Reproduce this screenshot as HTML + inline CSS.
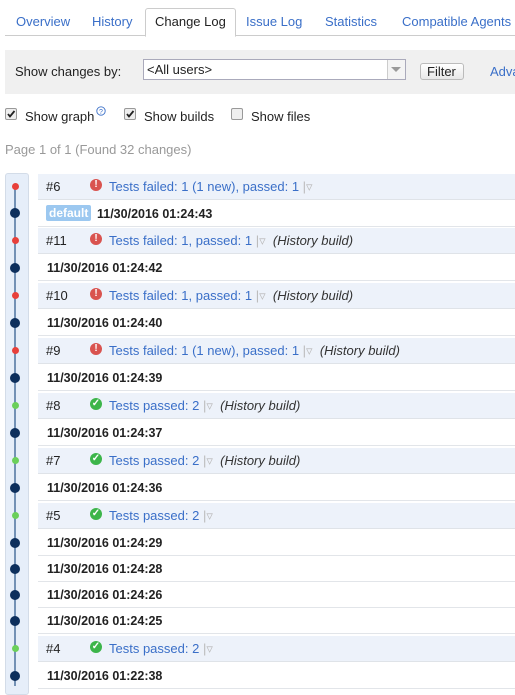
<!DOCTYPE html><html><head><style>
body{margin:0;width:515px;height:680px;overflow:hidden;background:#fff;font-family:"Liberation Sans",Arial,sans-serif;font-size:13px;color:#222;position:relative}
.a{position:absolute;white-space:nowrap}
.tab{position:absolute;top:14px;color:#3a6fc8;font-size:13px}
.b{position:absolute;left:38px;right:0;height:25px;background:#edf2fa;border-bottom:1px solid #dfe3e8}
.c{position:absolute;left:38px;right:0;height:25px;border-bottom:1px solid #e2e5e9}
.b span,.c span{position:absolute;top:5px;white-space:nowrap}
.num{left:8px}
.ic{left:52px;top:5px!important;width:12px;height:12px;border-radius:50%;color:#fff;font-size:10px;font-weight:bold;text-align:center;line-height:12px}
.f{background:#d9534f}.p{background:#3cb54a}
.st{left:71px;color:#3a6fc8}
.st i{font-style:normal;color:#bbb}
.hb{font-style:italic;color:#333}
.d{left:9px;font-weight:bold;font-size:12.5px;top:6px!important}
.dot{position:absolute;border-radius:50%}
.cb{position:absolute;width:10px;height:10px;border:1px solid #999;border-radius:2px;background:#eee}
</style></head><body>
<div class="a" style="left:5px;top:35px;width:510px;border-top:1px solid #ccc"></div>
<div class="a" style="left:145px;top:8px;width:89px;height:27px;border:1px solid #ccc;border-bottom:1px solid #fff;border-radius:3px 3px 0 0;background:#fff"></div>
<span class="tab" style="left:16px">Overview</span>
<span class="tab" style="left:92px">History</span>
<span class="tab" style="left:155px;color:#222">Change Log</span>
<span class="tab" style="left:246px">Issue Log</span>
<span class="tab" style="left:325px">Statistics</span>
<span class="tab" style="left:402px">Compatible Agents</span>
<div class="a" style="left:5px;top:50px;width:510px;height:44px;background:#f0f0f0"></div>
<span class="a" style="left:15px;top:64px">Show changes by:</span>
<div class="a" style="left:143px;top:59px;width:261px;height:19px;border:1px solid #aab;background:#fff"></div>
<span class="a" style="left:147px;top:62px">&lt;All users&gt;</span>
<div class="a" style="left:387px;top:60px;width:17px;height:19px;border-left:1px solid #ccc;background:#f4f4f4"></div>
<div class="a" style="left:391px;top:67px;border-left:5px solid transparent;border-right:5px solid transparent;border-top:5px solid #999"></div>
<div class="a" style="left:420px;top:63px;width:42px;height:15px;border:1px solid #bbb;border-radius:3px;background:linear-gradient(#fff,#e8e8e8)"></div>
<span class="a" style="left:427px;top:64px">Filter</span>
<span class="a" style="left:490px;top:64px;color:#3a6fc8">Adva</span>
<div class="cb" style="left:5px;top:108px"><svg width="10" height="10" style="position:absolute;left:0;top:0"><path d="M2 5 L4 7.5 L8.5 2" stroke="#222" stroke-width="1.8" fill="none"/></svg></div>
<span class="a" style="left:25px;top:109px">Show graph</span>
<svg class="a" style="left:96px;top:106px" width="10" height="10"><circle cx="5" cy="5" r="4.2" fill="none" stroke="#3a6fc8" stroke-width="0.9"/><text x="5" y="8" font-size="7" text-anchor="middle" fill="#3a6fc8" font-family="Liberation Sans">?</text></svg>
<div class="cb" style="left:124px;top:108px"><svg width="10" height="10" style="position:absolute;left:0;top:0"><path d="M2 5 L4 7.5 L8.5 2" stroke="#222" stroke-width="1.8" fill="none"/></svg></div>
<span class="a" style="left:144px;top:109px">Show builds</span>
<div class="cb" style="left:231px;top:108px"></div>
<span class="a" style="left:251px;top:109px">Show files</span>
<span class="a" style="left:5px;top:142px;color:#999">Page 1 of 1 (Found 32 changes)</span>

<div class="a" style="left:5px;top:173px;width:22px;height:520px;background:#e6eef9;border:1px solid #d3dce8;border-radius:3px"></div>
<div class="a" style="left:14px;top:186px;width:2px;height:500px;background:#7391b5"></div>

<div class="b" style="top:174px"><span class="num">#6</span><span class="ic f">!</span><span class="st">Tests failed: 1 (1 new), passed: 1 <i>|</i><i>▿</i></span></div>
<div class="c" style="top:201px"><span style="left:8px;top:4px;background:#9cc8f0;color:#fff;font-weight:bold;font-size:12px;padding:1px 3px;border-radius:2px">default</span><span class="d" style="left:59px">11/30/2016 01:24:43</span></div>
<div class="b" style="top:228px"><span class="num">#11</span><span class="ic f">!</span><span class="st">Tests failed: 1, passed: 1 <i>|</i><i>▿</i> &nbsp;<em class="hb">(History build)</em></span></div>
<div class="c" style="top:255px"><span class="d">11/30/2016 01:24:42</span></div>
<div class="b" style="top:283px"><span class="num">#10</span><span class="ic f">!</span><span class="st">Tests failed: 1, passed: 1 <i>|</i><i>▿</i> &nbsp;<em class="hb">(History build)</em></span></div>
<div class="c" style="top:310px"><span class="d">11/30/2016 01:24:40</span></div>
<div class="b" style="top:338px"><span class="num">#9</span><span class="ic f">!</span><span class="st">Tests failed: 1 (1 new), passed: 1 <i>|</i><i>▿</i> &nbsp;<em class="hb">(History build)</em></span></div>
<div class="c" style="top:365px"><span class="d">11/30/2016 01:24:39</span></div>
<div class="b" style="top:393px"><span class="num">#8</span><span class="ic p">✓</span><span class="st">Tests passed: 2 <i>|</i><i>▿</i> &nbsp;<em class="hb">(History build)</em></span></div>
<div class="c" style="top:420px"><span class="d">11/30/2016 01:24:37</span></div>
<div class="b" style="top:448px"><span class="num">#7</span><span class="ic p">✓</span><span class="st">Tests passed: 2 <i>|</i><i>▿</i> &nbsp;<em class="hb">(History build)</em></span></div>
<div class="c" style="top:475px"><span class="d">11/30/2016 01:24:36</span></div>
<div class="b" style="top:503px"><span class="num">#5</span><span class="ic p">✓</span><span class="st">Tests passed: 2 <i>|</i><i>▿</i></span></div>
<div class="c" style="top:530px"><span class="d">11/30/2016 01:24:29</span></div>
<div class="c" style="top:556px"><span class="d">11/30/2016 01:24:28</span></div>
<div class="c" style="top:582px"><span class="d">11/30/2016 01:24:26</span></div>
<div class="c" style="top:608px"><span class="d">11/30/2016 01:24:25</span></div>
<div class="b" style="top:636px"><span class="num">#4</span><span class="ic p">✓</span><span class="st">Tests passed: 2 <i>|</i><i>▿</i></span></div>
<div class="c" style="top:663px"><span class="d">11/30/2016 01:22:38</span></div>

<div class="dot" style="left:12px;top:183px;width:7px;height:7px;background:#e8403a"></div>
<div class="dot" style="left:10px;top:208px;width:10px;height:10px;background:#0d2f5c"></div>
<div class="dot" style="left:12px;top:237px;width:7px;height:7px;background:#e8403a"></div>
<div class="dot" style="left:10px;top:263px;width:10px;height:10px;background:#0d2f5c"></div>
<div class="dot" style="left:12px;top:292px;width:7px;height:7px;background:#e8403a"></div>
<div class="dot" style="left:10px;top:318px;width:10px;height:10px;background:#0d2f5c"></div>
<div class="dot" style="left:12px;top:347px;width:7px;height:7px;background:#e8403a"></div>
<div class="dot" style="left:10px;top:373px;width:10px;height:10px;background:#0d2f5c"></div>
<div class="dot" style="left:12px;top:402px;width:7px;height:7px;background:#6bd05a"></div>
<div class="dot" style="left:10px;top:428px;width:10px;height:10px;background:#0d2f5c"></div>
<div class="dot" style="left:12px;top:457px;width:7px;height:7px;background:#6bd05a"></div>
<div class="dot" style="left:10px;top:483px;width:10px;height:10px;background:#0d2f5c"></div>
<div class="dot" style="left:12px;top:512px;width:7px;height:7px;background:#6bd05a"></div>
<div class="dot" style="left:10px;top:538px;width:10px;height:10px;background:#0d2f5c"></div>
<div class="dot" style="left:10px;top:564px;width:10px;height:10px;background:#0d2f5c"></div>
<div class="dot" style="left:10px;top:590px;width:10px;height:10px;background:#0d2f5c"></div>
<div class="dot" style="left:10px;top:616px;width:10px;height:10px;background:#0d2f5c"></div>
<div class="dot" style="left:12px;top:645px;width:7px;height:7px;background:#6bd05a"></div>
<div class="dot" style="left:10px;top:671px;width:10px;height:10px;background:#0d2f5c"></div>
</body></html>
